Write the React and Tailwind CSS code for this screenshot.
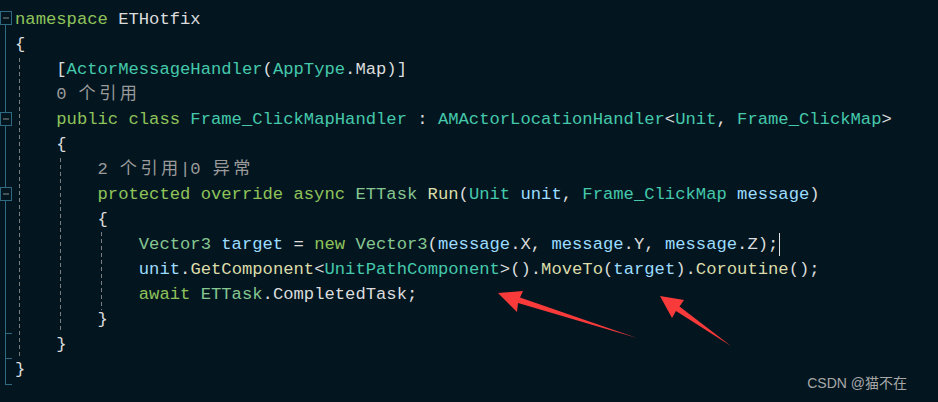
const tone = {
	k: 'text-[#8fc35a]',
	t: 'text-[#45c8ab]',
	s: 'text-[#86c691]',
	m: 'text-[#dcdcaa]',
	p: 'text-[#9cdcfe]',
	d: 'text-[#dcdcdc]',
	c: 'text-[#9a9a9a]',
}

const lines = [
	[0, [['k', 'namespace'], ['d', ' ETHotfix']]],
	[0, [['d', '{']]],
	[4, [['d', '['], ['t', 'ActorMessageHandler'], ['d', '('], ['t', 'AppType'], ['d', '.Map)]']]],
	[4, [['c', '0 '], ['cjk', '个引用']]],
	[
		4,
		[
			['k', 'public class '],
			['t', 'Frame_ClickMapHandler'],
			['d', ' : '],
			['t', 'AMActorLocationHandler'],
			['d', '<'],
			['t', 'Unit'],
			['d', ', '],
			['t', 'Frame_ClickMap'],
			['d', '>'],
		],
	],
	[4, [['d', '{']]],
	[8, [['c', '2 '], ['cjk', '个引用'], ['c', '|0 '], ['cjk', '异常']]],
	[
		8,
		[
			['k', 'protected override async '],
			['s', 'ETTask'],
			['d', ' '],
			['m', 'Run'],
			['d', '('],
			['t', 'Unit'],
			['p', ' unit'],
			['d', ', '],
			['t', 'Frame_ClickMap'],
			['p', ' message'],
			['d', ')'],
		],
	],
	[8, [['d', '{']]],
	[
		12,
		[
			['s', 'Vector3'],
			['p', ' target'],
			['d', ' = '],
			['k', 'new '],
			['s', 'Vector3'],
			['d', '('],
			['p', 'message'],
			['d', '.X, '],
			['p', 'message'],
			['d', '.Y, '],
			['p', 'message'],
			['d', '.Z);'],
			['caret', ''],
		],
	],
	[
		12,
		[
			['p', 'unit'],
			['d', '.'],
			['m', 'GetComponent'],
			['d', '<'],
			['t', 'UnitPathComponent'],
			['d', '>().'],
			['m', 'MoveTo'],
			['d', '('],
			['p', 'target'],
			['d', ').'],
			['m', 'Coroutine'],
			['d', '();'],
		],
	],
	[12, [['k', 'await '], ['s', 'ETTask'], ['d', '.CompletedTask;']]],
	[8, [['d', '}']]],
	[4, [['d', '}']]],
	[0, [['d', '}']]],
]

const Token = ({ kind, text }) => {
	if (kind === 'caret') return <span className="inline-block w-px h-[23px] bg-[#e0e0e0] ml-[1px]" />
	if (kind === 'cjk')
		return (
			<>
				{[...text].map((ch, i) => (
					<span key={i} className="inline-block w-[2ch] text-center text-[#9a9a9a]">
						{ch}
					</span>
				))}
			</>
		)
	return <span className={tone[kind]}>{text}</span>
}

const FoldBox = ({ y }) => (
	<g>
		<rect x="0.5" y={y + 0.5} width="11" height="13" fill="#031620" stroke="#2f6a82" />
		<line x1="3" y1={y + 7} x2="9" y2={y + 7} stroke="#8a8a8a" />
	</g>
)

const Gutter = () => (
	<svg className="absolute left-0 top-0 pointer-events-none" width="938" height="402">
		{/* outline bar */}
		<line x1="5.5" y1="25" x2="5.5" y2="384" stroke="#2f6a82" />
		<line x1="5" y1="333.5" x2="12" y2="333.5" stroke="#2f6a82" />
		<line x1="5" y1="358.5" x2="12" y2="358.5" stroke="#2f6a82" />
		<line x1="5" y1="384.5" x2="12" y2="384.5" stroke="#2f6a82" />
		<FoldBox y={11} />
		<FoldBox y={112} />
		<FoldBox y={187} />
		{/* indent guides */}
		<line x1="19.5" y1="58" x2="19.5" y2="358" stroke="#7c7c7c" strokeDasharray="4 3" />
		<line x1="60.5" y1="158" x2="60.5" y2="333" stroke="#7c7c7c" strokeDasharray="4 3" />
		<line x1="101.5" y1="232" x2="101.5" y2="310" stroke="#7c7c7c" strokeDasharray="4 3" />
	</svg>
)

const Arrows = () => (
	<svg className="absolute left-0 top-0 pointer-events-none" width="938" height="402">
		<polygon
			points="498,293 523,291 520,297.5 637,338 518,303 517,312"
			fill="#f83a3a"
		/>
		<polygon
			points="660,296 684,300 679.5,306.5 731,346 676,311 672,318"
			fill="#f83a3a"
		/>
	</svg>
)

export default function App() {
	return (
		<div className="relative w-[938px] h-[402px] overflow-hidden bg-[#031620]">
			<Gutter />
			<div className="flex flex-col pt-[7px] pl-[15px] font-['Liberation_Mono','Noto_Sans_CJK_SC',monospace] text-[17.2px]">
				{lines.map(([indent, tokens], i) => (
					<div key={i} className="h-[25px] flex items-center whitespace-pre">
						<span>{' '.repeat(indent)}</span>
						{tokens.map(([kind, text], j) => (
							<Token key={j} kind={kind} text={text} />
						))}
					</div>
				))}
			</div>
			<Arrows />
			<div className="absolute right-[31px] bottom-[8px] text-[14px] text-[#a8a8a8] font-['Liberation_Sans','Noto_Sans_CJK_SC',sans-serif]">
				CSDN @猫不在
			</div>
		</div>
	)
}
